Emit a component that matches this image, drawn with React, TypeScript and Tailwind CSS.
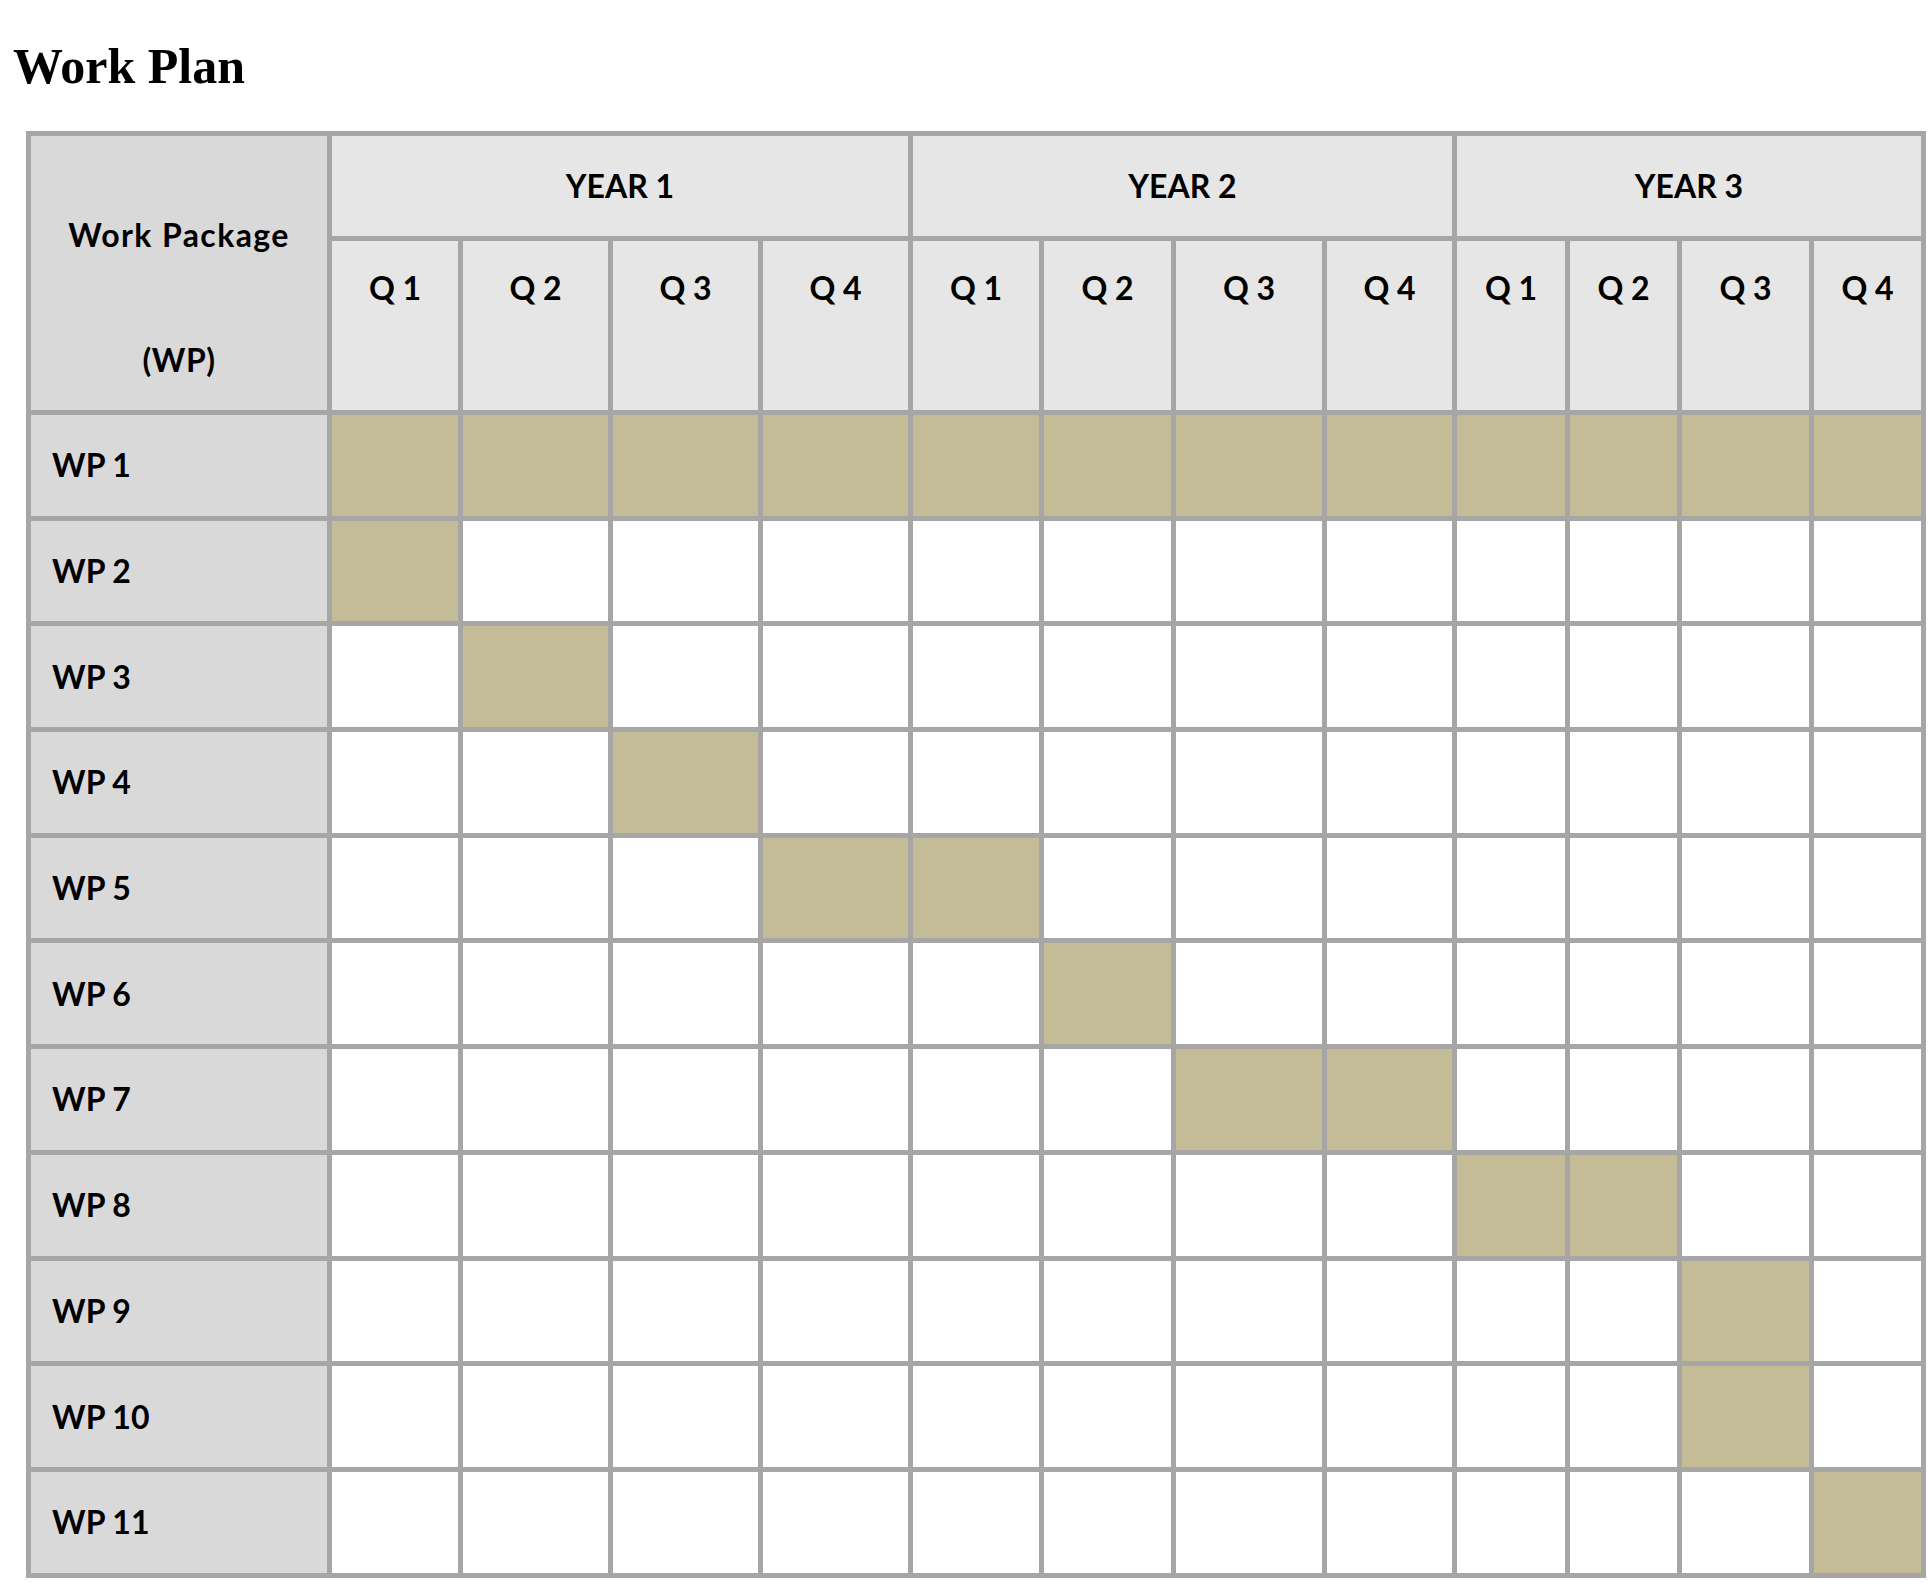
const years = ["YEAR 1", "YEAR 2", "YEAR 3"];

// which quarter columns (0-11) are filled for each work package
const plan: number[][] = [
  [0, 1, 2, 3, 4, 5, 6, 7, 8, 9, 10, 11],
  [0],
  [1],
  [2],
  [3, 4],
  [5],
  [6, 7],
  [8, 9],
  [10],
  [10],
  [11],
];

export default function App() {
  return (
    <div className="min-h-screen bg-white">
      <h1 className="pl-[13px] pt-[41px] font-['Liberation_Serif',serif] text-[50px] font-bold leading-none text-black">
        Work Plan
      </h1>

      <div className="ml-[26px] mt-[40px] inline-grid grid-cols-[296px_126px_145px_145px_145px_126px_127px_146px_125px_108px_107px_127px_107px] grid-rows-[100px_169px_repeat(11,100.7px)] gap-[5px] bg-[#a6a6a6] p-[5px] font-['Lato',sans-serif] text-[32px] font-bold leading-none text-black">
        <div className="row-span-2 flex flex-col items-center bg-[#d9d9d9] pt-[83px]">
          <span className="tracking-[1.4px]">Work Package</span>
          <span className="mt-[93px] tracking-[0.5px]">(WP)</span>
        </div>

        {years.map((y) => (
          <div
            key={y}
            className="col-span-4 flex items-center justify-center bg-[#e6e6e6]"
          >
            {y}
          </div>
        ))}

        {Array.from({ length: 12 }).map((_, i) => (
          <div
            key={i}
            className="flex justify-center bg-[#e6e6e6] pt-[31px]"
          >
            Q {(i % 4) + 1}
          </div>
        ))}

        {plan.map((cols, r) => (
          <div key={r} className="contents">
            <div className="flex items-center bg-[#d9d9d9] pl-[21px]">
              WP {r + 1}
            </div>
            {Array.from({ length: 12 }).map((_, c) => (
              <div
                key={c}
                className={cols.includes(c) ? "bg-[#c4bc96]" : "bg-white"}
              />
            ))}
          </div>
        ))}
      </div>
    </div>
  );
}
